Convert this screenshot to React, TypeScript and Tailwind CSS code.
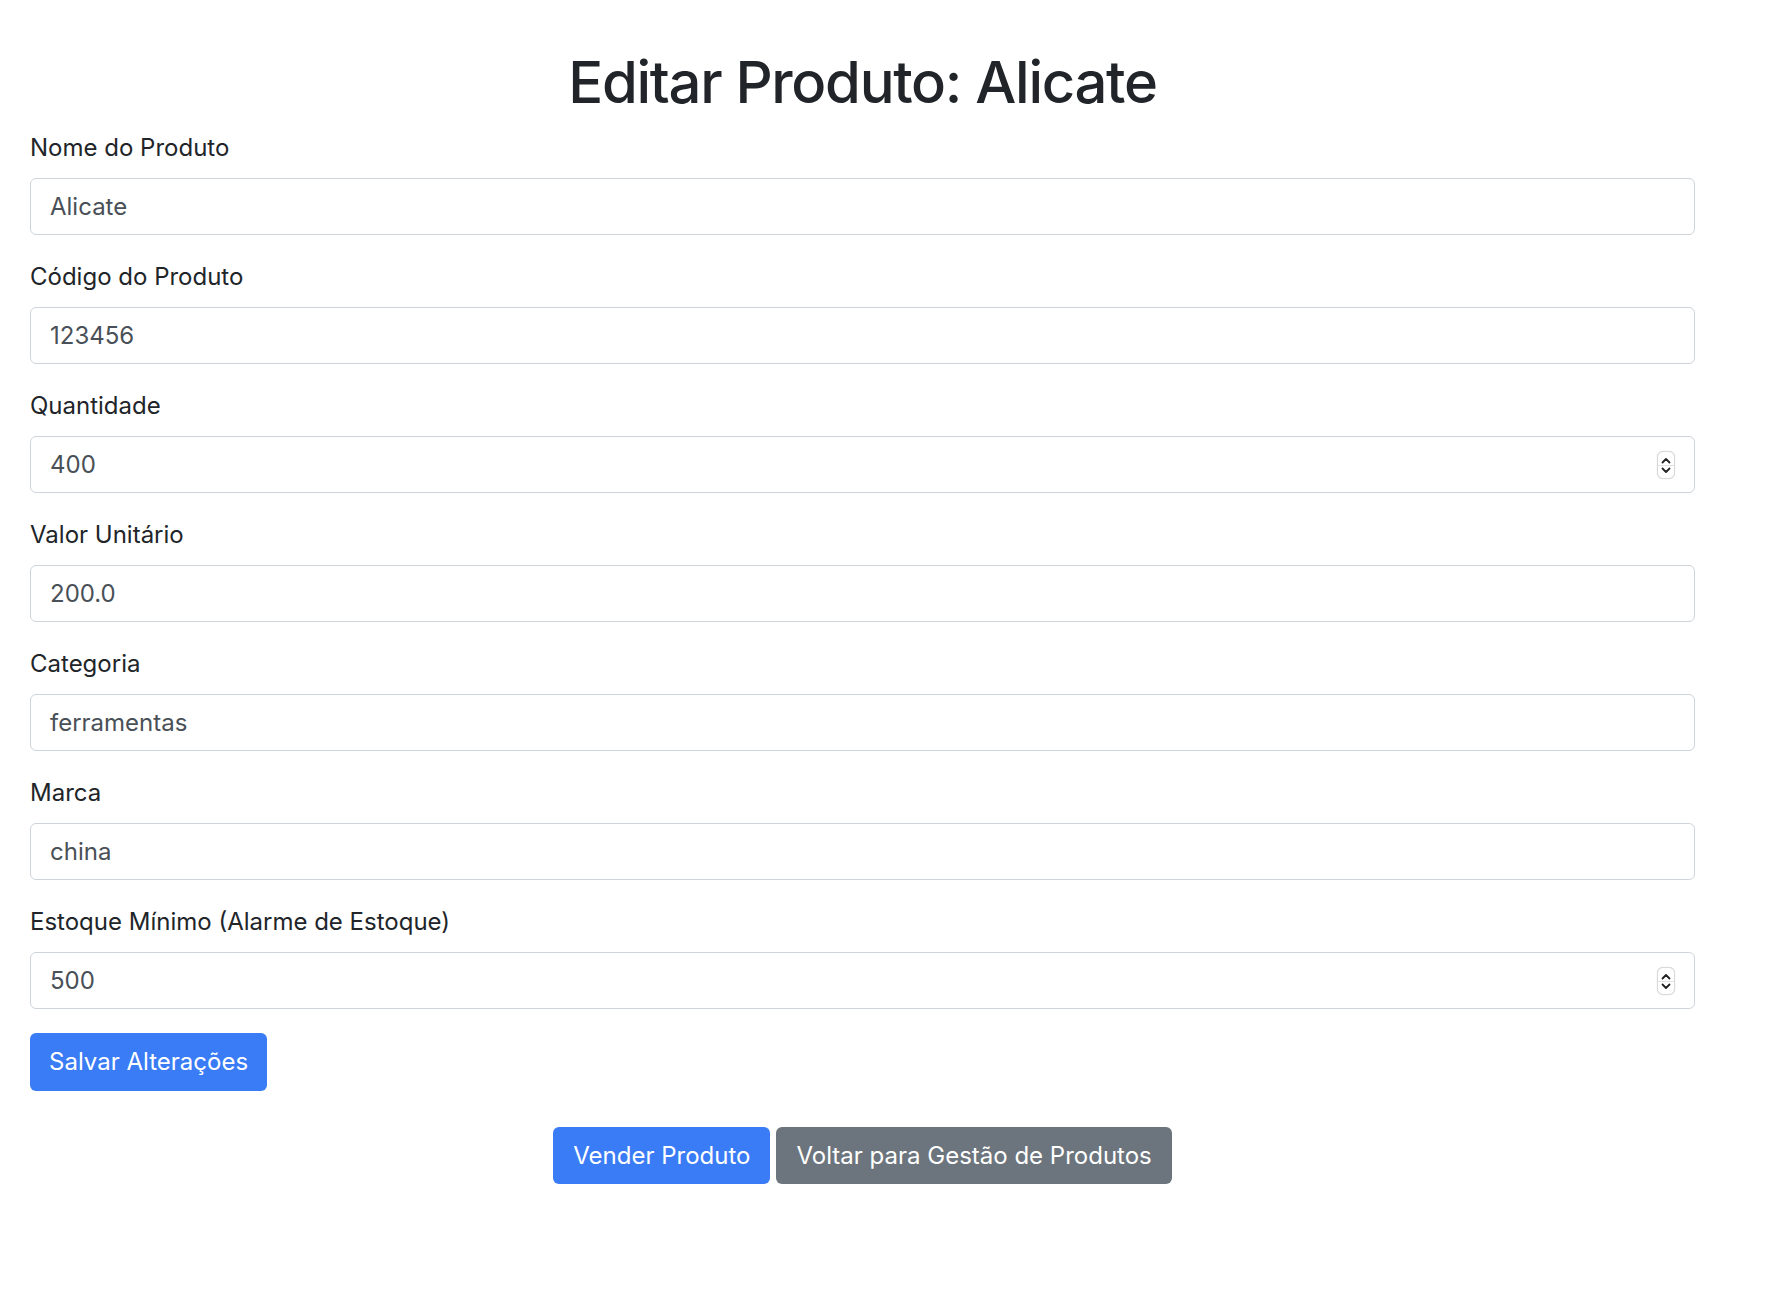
import React from "react";

const font = { fontFamily: "Inter, 'Liberation Sans', sans-serif" };

function Spinner() {
  return (
    <div className="absolute right-[20px] top-1/2 -translate-y-1/2 w-[18px] h-[28px] rounded-[6px] bg-white border border-[#d9d9d9] shadow-[0_0_1px_rgba(0,0,0,0.2)] flex flex-col items-center justify-center overflow-hidden">
      <svg width="10" height="7" viewBox="0 0 10 7" className="mt-[1px]">
        <path d="M1.5 5.5 L5 2 L8.5 5.5" fill="none" stroke="#222" strokeWidth="1.8" strokeLinecap="round" strokeLinejoin="round" />
      </svg>
      <div className="w-full h-px bg-[#e2e2e2] my-[1px]" />
      <svg width="10" height="7" viewBox="0 0 10 7">
        <path d="M1.5 1.5 L5 5 L8.5 1.5" fill="none" stroke="#222" strokeWidth="1.8" strokeLinecap="round" strokeLinejoin="round" />
      </svg>
    </div>
  );
}

function Field({ label, value, spin }: { label: string; value: string; spin?: boolean }) {
  return (
    <div className="mb-[24px]">
      <label className="block text-[24px] leading-[36px] text-[#212529] mb-[12px]">{label}</label>
      <div className="relative">
        <div className="h-[57px] w-full border border-[#ced4da] rounded-[6px] px-[19px] flex items-center text-[24px] text-[#495057] bg-white">
          {value}
        </div>
        {spin && <Spinner />}
      </div>
    </div>
  );
}

export default function App() {
  return (
    <div className="min-h-[1314px] bg-white" style={font}>
      <div className="ml-[30px] w-[1665px] pt-[46px]">
        <h1 className="text-center text-[58px] leading-[72px] font-medium text-[#212529] mb-[12px] tracking-[-1.3px]">
          Editar Produto: Alicate
        </h1>
        <Field label="Nome do Produto" value="Alicate" />
        <Field label="Código do Produto" value="123456" />
        <Field label="Quantidade" value="400" spin />
        <Field label="Valor Unitário" value="200.0" />
        <Field label="Categoria" value="ferramentas" />
        <Field label="Marca" value="china" />
        <Field label="Estoque Mínimo (Alarme de Estoque)" value="500" spin />
        <button className="h-[58px] px-[19px] rounded-[6px] bg-[#3a7bf6] text-white text-[24px]">
          Salvar Alterações
        </button>
        <div className="mt-[36px] flex justify-center gap-[6px]">
          <button className="h-[57px] px-[20px] rounded-[6px] bg-[#3a7bf6] text-white text-[24px]">
            Vender Produto
          </button>
          <button className="h-[57px] px-[20px] rounded-[6px] bg-[#6c757d] text-white text-[24px]">
            Voltar para Gestão de Produtos
          </button>
        </div>
      </div>
    </div>
  );
}
